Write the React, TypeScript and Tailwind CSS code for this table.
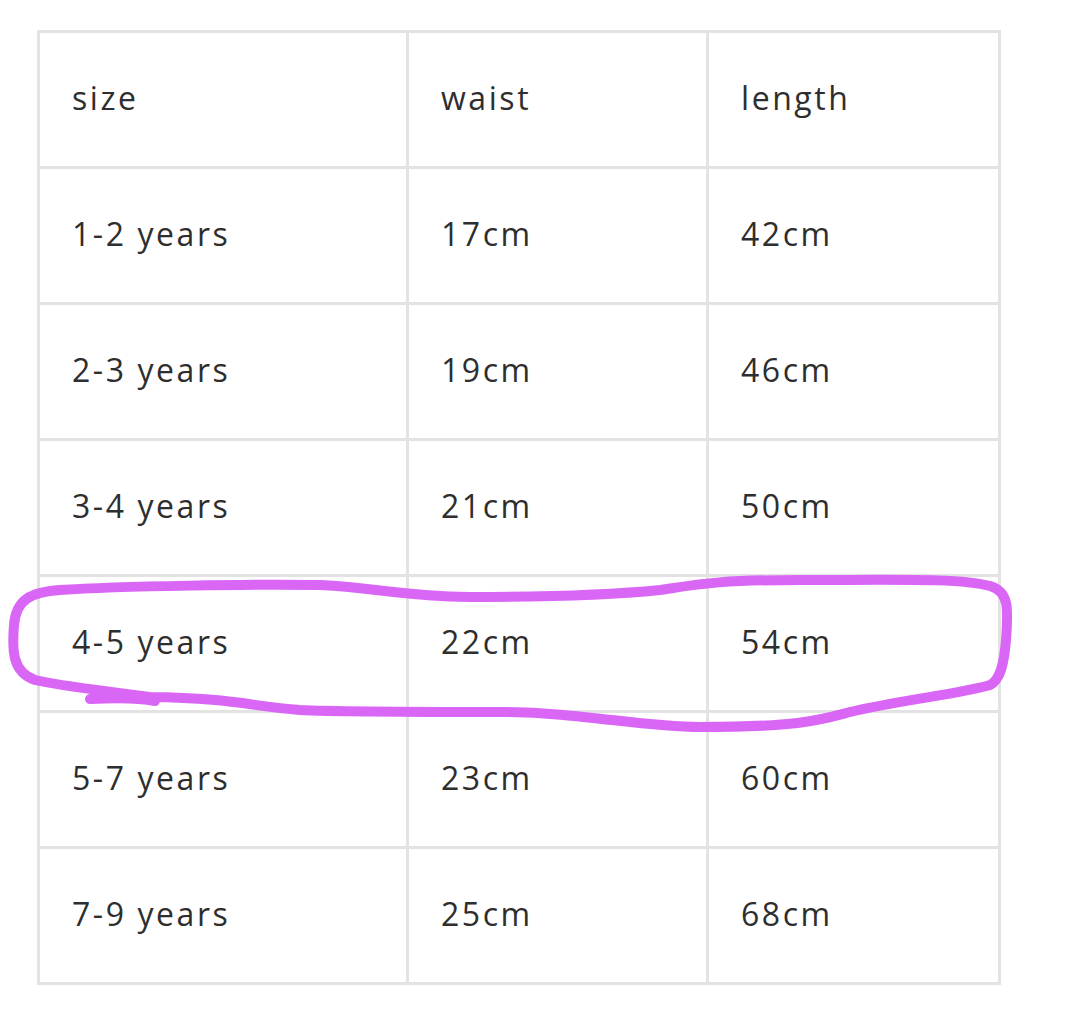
import React from "react";

const rows = [
  ["size", "waist", "length"],
  ["1-2 years", "17cm", "42cm"],
  ["2-3 years", "19cm", "46cm"],
  ["3-4 years", "21cm", "50cm"],
  ["4-5 years", "22cm", "54cm"],
  ["5-7 years", "23cm", "60cm"],
  ["7-9 years", "25cm", "68cm"],
];

export default function App() {
  return (
    <div className="relative w-[1080px] h-[1032px] bg-white overflow-hidden">
      <div className="pt-[30px] pl-[37px]">
        <div
          className="w-[964px] border-t-[3px] border-l-[3px] border-[#e3e3e3] text-[#2e2e2e] text-[32px] tracking-[0.08em]"
          style={{ fontFamily: '"Open Sans", "Noto Sans", sans-serif' }}
        >
          {rows.map((r, i) => (
            <div key={i} className="grid grid-cols-[369px_300px_292px] h-[136px]">
              {r.map((c, j) => (
                <div
                  key={j}
                  className="flex items-center pl-[32px] pb-[3px] border-r-[3px] border-b-[3px] border-[#e3e3e3]"
                >
                  {c}
                </div>
              ))}
            </div>
          ))}
        </div>
      </div>
      <svg
        className="absolute left-0 top-0 pointer-events-none"
        width="1080"
        height="1032"
        viewBox="0 0 1080 1032"
      >
        <path
          d="M60 590 C120 586 260 584 320 585 C380 588 400 596 470 597 C540 597 600 596 660 590 C700 584 720 580 800 580 C900 580 960 578 990 586 C1010 592 1008 610 1006 640 C1004 665 1000 680 990 685 C960 694 900 700 850 712 C820 720 800 727 700 727 C640 727 580 712 500 712 C420 712 340 712 300 710 C250 706 230 698 150 697 C100 690 60 686 35 680 C12 672 12 650 14 625 C16 600 30 592 60 590 Z M90 699 C110 698 140 698 155 701"
          fill="none"
          stroke="#da66f6"
          strokeWidth="10"
          strokeLinecap="round"
          strokeLinejoin="round"
        />
      </svg>
    </div>
  );
}
